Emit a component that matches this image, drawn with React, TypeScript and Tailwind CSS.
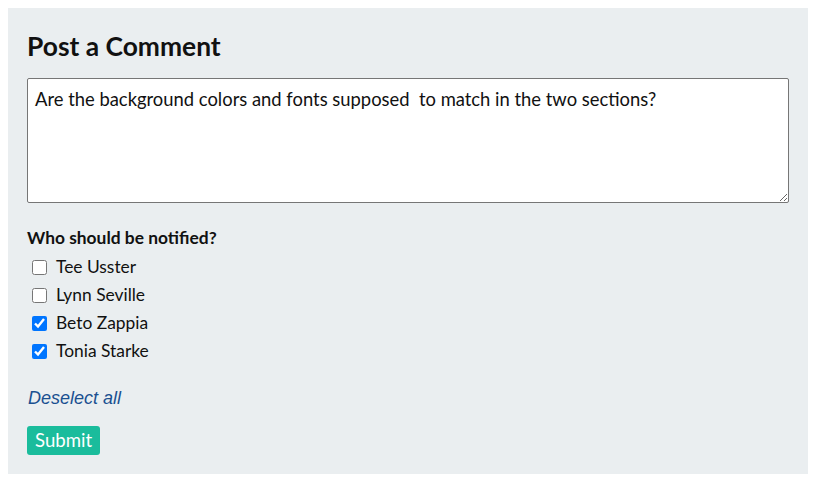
import { useState } from 'react';

const people = [
  { name: 'Tee Usster', checked: false },
  { name: 'Lynn Seville', checked: false },
  { name: 'Beto Zappia', checked: true },
  { name: 'Tonia Starke', checked: true },
];

export default function App() {
  const [comment, setComment] = useState(
    'Are the background colors and fonts supposed  to match in the two sections?'
  );
  const [checked, setChecked] = useState(people.map(p => p.checked));

  return (
    <div className="p-2 bg-white" style={{ fontFamily: 'Lato, "Noto Sans", sans-serif' }}>
      <div className="bg-[#eaeef0] px-[19px] pt-[23px] pb-[19px] text-[#111]">
        {/* heading */}
        <h2 className="text-[26.4px] font-bold leading-[30px] mb-[17px]">Post a Comment</h2>

        <textarea
          value={comment}
          onChange={e => setComment(e.target.value)}
          className="block w-full h-[125px] bg-white border border-[#767676] rounded-[2px] px-[7px] py-[7px] text-[18.4px] leading-[27px] text-[#111] outline-none"
          style={{ fontFamily: 'Lato, "Noto Sans", sans-serif' }}
        />

        <div className="mt-[24px] text-[17.4px] font-bold leading-[22px]">Who should be notified?</div>

        <div className="flex flex-col mt-[4px]">
          {people.map((p, i) => (
            <label key={p.name} className="flex items-center h-[28px] text-[17.4px]">
              <input
                type="checkbox"
                checked={checked[i]}
                onChange={() => setChecked(prev => prev.map((c, j) => (j === i ? !c : c)))}
                className="w-[15px] h-[15px] ml-[5px] mr-[9px] accent-[#0075ff]"
              />
              {p.name}
            </label>
          ))}
        </div>

        <button
          type="button"
          onClick={() => setChecked(people.map(() => false))}
          className="block mt-[22px] ml-[1px] text-[18px] italic text-[#1a5090] leading-[22px]"
          style={{ fontFamily: '"Liberation Sans", Arial, sans-serif' }}
        >
          Deselect all
        </button>

        <button
          type="button"
          className="block mt-[17px] bg-[#1abc9c] text-white text-[18.6px] leading-[29px] px-[8px] rounded-[3px]"
        >
          Submit
        </button>
      </div>
    </div>
  );
}
